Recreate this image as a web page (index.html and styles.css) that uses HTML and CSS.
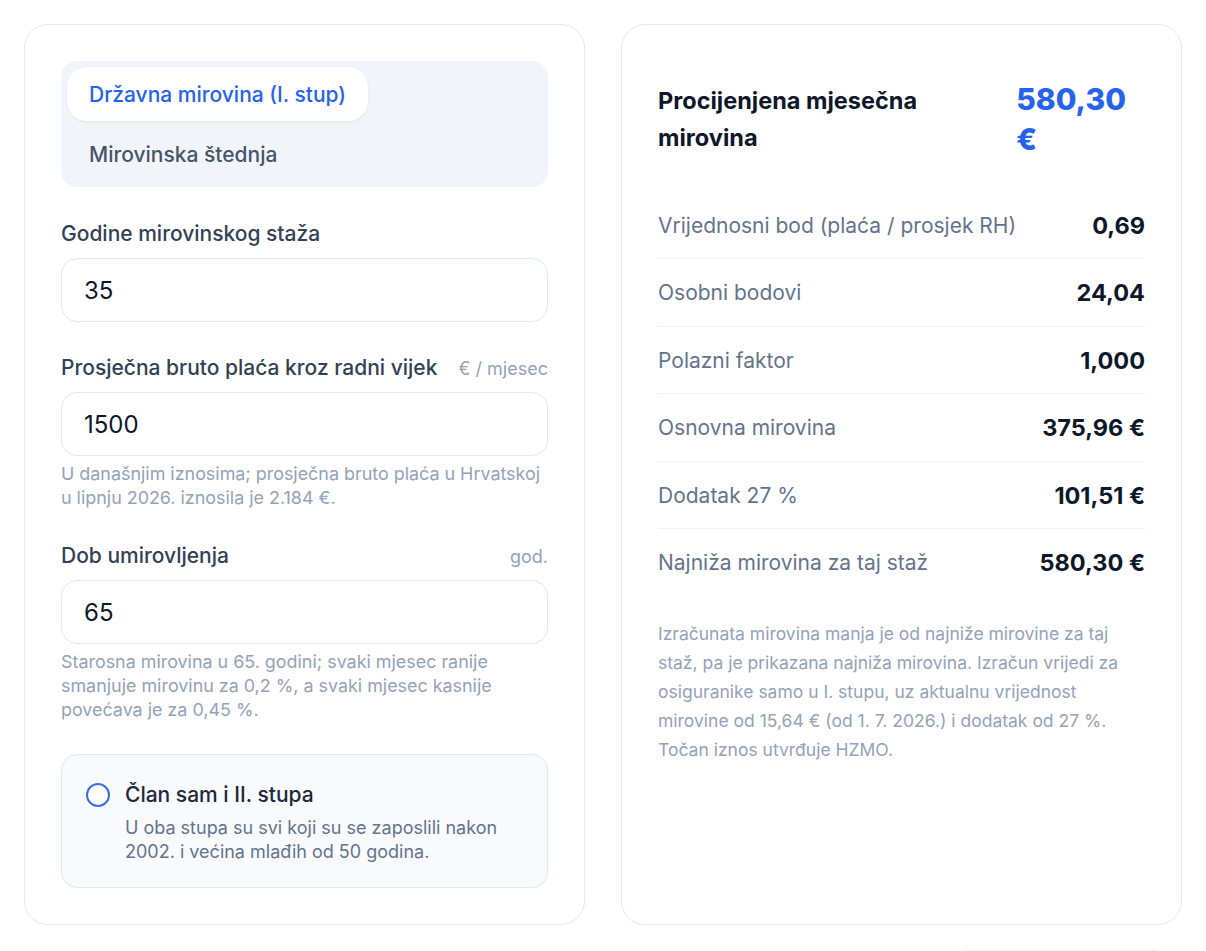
FILE: index.html
```html
<!DOCTYPE html>
<html lang="hr">
<head>
<meta charset="utf-8">
<title>Kalkulator mirovine</title>
<link rel="stylesheet" href="styles.css">
</head>
<body>
<div class="page">
  <div class="grid">
    <section class="card form-card">
      <div class="tabs">
        <button class="tab tab-active">Državna mirovina (I. stup)</button>
        <button class="tab">Mirovinska štednja</button>
      </div>

      <div class="field">
        <div class="label-row"><label class="label">Godine mirovinskog staža</label></div>
        <div class="input">35</div>
      </div>

      <div class="field">
        <div class="label-row"><label class="label">Prosječna bruto plaća kroz radni vijek</label><span class="unit">€ / mjesec</span></div>
        <div class="input">1500</div>
        <p class="help">U današnjim iznosima; prosječna bruto plaća u Hrvatskoj u lipnju 2026. iznosila je 2.184 €.</p>
      </div>

      <div class="field">
        <div class="label-row"><label class="label">Dob umirovljenja</label><span class="unit">god.</span></div>
        <div class="input">65</div>
        <p class="help">Starosna mirovina u 65. godini; svaki mjesec ranije smanjuje mirovinu za 0,2 %, a svaki mjesec kasnije povećava je za 0,45 %.</p>
      </div>

      <div class="check-card">
        <span class="radio"></span>
        <div class="check-text">
          <div class="check-title">Član sam i II. stupa</div>
          <div class="check-desc">U oba stupa su svi koji su se zaposlili nakon 2002. i većina mlađih od 50 godina.</div>
        </div>
      </div>
    </section>

    <section class="card result-card">
      <div class="result-head">
        <h2 class="result-title">Procijenjena mjesečna mirovina</h2>
        <div class="result-value">580,30 €</div>
      </div>
      <div class="rows">
        <div class="row"><span class="row-label">Vrijednosni bod (plaća / prosjek RH)</span><span class="row-value">0,69</span></div>
        <div class="row"><span class="row-label">Osobni bodovi</span><span class="row-value">24,04</span></div>
        <div class="row"><span class="row-label">Polazni faktor</span><span class="row-value">1,000</span></div>
        <div class="row"><span class="row-label">Osnovna mirovina</span><span class="row-value">375,96 €</span></div>
        <div class="row"><span class="row-label">Dodatak 27 %</span><span class="row-value">101,51 €</span></div>
        <div class="row"><span class="row-label">Najniža mirovina za taj staž</span><span class="row-value">580,30 €</span></div>
      </div>
      <p class="note">Izračunata mirovina manja je od najniže mirovine za taj staž, pa je prikazana najniža mirovina. Izračun vrijedi za osiguranike samo u I. stupu, uz aktualnu vrijednost mirovine od 15,64 € (od 1. 7. 2026.) i dodatak od 27 %. Točan iznos utvrđuje HZMO.</p>
    </section>
  </div>
  <div class="footer">
    <div class="footer-box"></div>
  </div>
</div>
</body>
</html>
```

FILE: styles.css
```css
* { box-sizing: border-box; }
html, body { margin: 0; padding: 0; background: #ffffff; }
body {
  font-family: Inter, "Noto Sans", "Liberation Sans", sans-serif;
  color: #0f172a;
  overflow: hidden;
}
.page { padding: 24px 24px 0; }
.grid {
  display: grid;
  grid-template-columns: 1fr 1fr;
  gap: 36px;
}
.card {
  border: 1px solid #e5e7eb;
  border-radius: 24px;
  padding: 36px;
  background: #fff;
  height: 901px;
}
.form-card {
  display: flex;
  flex-direction: column;
  gap: 32px;
}
.tabs {
  background: #f1f5f9;
  border-radius: 16px;
  padding: 6px;
  display: flex;
  flex-direction: column;
  gap: 6px;
  align-items: flex-start;
  margin-bottom: 1px;
}
.tab {
  font-family: inherit;
  border: 0;
  background: transparent;
  height: 54px;
  padding: 0 22px;
  border-radius: 20px;
  font-size: 21px;
  font-weight: 500;
  color: #475569;
  cursor: pointer;
}
.tab-active {
  background: #fff;
  color: #2563eb;
  box-shadow: 0 1px 3px rgba(15, 23, 42, 0.07);
}
.field { display: flex; flex-direction: column; }
.label-row {
  display: flex;
  justify-content: space-between;
  align-items: baseline;
  margin-bottom: 10px;
}
.label {
  font-size: 21px;
  line-height: 28px;
  font-weight: 500;
  color: #334155;
}
.unit {
  font-size: 18px;
  color: #94a3b8;
}
.input {
  height: 64px;
  border: 1px solid #e2e8f0;
  border-radius: 16px;
  padding: 0 22px;
  display: flex;
  align-items: center;
  font-size: 24px;
  color: #0f172a;
  background: #fff;
}
.help {
  margin: 6px 0 0;
  font-size: 17.9px;
  line-height: 24px;
  color: #94a3b8;
}
.check-card {
  display: flex;
  gap: 15px;
  align-items: flex-start;
  background: #f8fafc;
  border: 1px solid #e2e8f0;
  border-radius: 16px;
  padding: 26px 24px 23px;
}
.radio {
  flex: none;
  width: 24px;
  height: 24px;
  border-radius: 50%;
  border: 2px solid #3b6fe0;
  background: #fff;
  margin-top: 2px;
}
.check-title {
  font-size: 21px;
  line-height: 28px;
  font-weight: 500;
  color: #1e293b;
  margin-bottom: 7px;
}
.check-desc {
  font-size: 18px;
  line-height: 24px;
  color: #64748b;
}
.result-head {
  display: flex;
  gap: 16px;
  align-items: flex-start;
  padding: 18px 0 33px;
}
.result-title {
  margin: 0;
  padding-top: 3px;
  font-size: 23.5px;
  line-height: 37px;
  font-weight: 700;
  color: #0f172a;
}
.result-value {
  font-size: 30px;
  line-height: 40px;
  font-weight: 800;
  color: #2563eb;
}
.row {
  display: flex;
  justify-content: space-between;
  align-items: center;
  padding: 20px 0 19.4px;
  border-bottom: 1px solid #eef2f6;
  line-height: 27px;
}
.row:last-child { border-bottom: 0; }
.row-label {
  font-size: 21px;
  color: #64748b;
}
.row-value {
  font-size: 23.5px;
  font-weight: 700;
  color: #0f172a;
}
.note {
  margin: 24px 0 0;
  font-size: 17.5px;
  line-height: 29px;
  color: #94a3b8;
}
.footer {
  display: flex;
  justify-content: flex-end;
  padding-right: 14px;
  margin-top: 25px;
}
.footer-box {
  width: 211px;
  height: 44px;
  border: 1px solid #eef0f3;
  border-radius: 12px;
}
```
